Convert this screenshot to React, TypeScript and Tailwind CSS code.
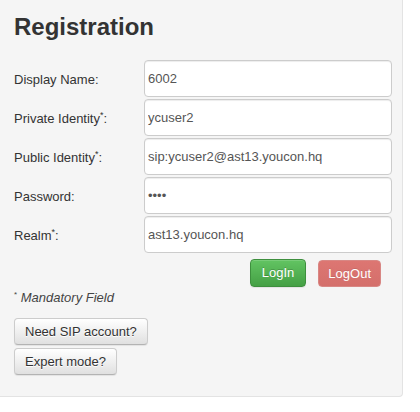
import React from "react";

const font = { fontFamily: '"Liberation Sans", Arial, sans-serif' };

function Row({ label, req, value, type = "text" }: { label: string; req?: boolean; value: string; type?: string }) {
  return (
    <div className="flex items-center h-[37px]">
      <label className="w-[130px] text-[13px] text-[#333] pt-[3px]">
        {label}
        {req && <sup className="text-[9px] -top-[5px]">*</sup>}:
      </label>
      <input
        type={type}
        readOnly
        value={value}
        className="w-[248px] h-[37px] px-[3px] bg-white border border-[#cccccc] rounded-[4px] text-[13px] text-[#555] outline-none shadow-[inset_0_1px_1px_rgba(0,0,0,0.075)]"
        style={font}
      />
    </div>
  );
}

export default function App() {
  return (
    <div className="w-[420px] h-[412px] bg-white" style={font}>
      <div className="w-[403px] h-[397px] bg-[#f5f5f5] border-r border-b border-[#e3e3e3] rounded-br-[4px] pl-[14px] pr-[10px] pt-[15px]">
        <h2 className="text-[24px] leading-[24px] font-bold text-[#333]">Registration</h2>
        <div className="mt-[21px] flex flex-col gap-[2px]">
          <Row label="Display Name" value="6002" />
          <Row label="Private Identity" req value="ycuser2" />
          <Row label="Public Identity" req value="sip:ycuser2@ast13.youcon.hq" />
          <Row label="Password" value="abcd" type="password" />
          <Row label="Realm" req value="ast13.youcon.hq" />
        </div>
        <div className="mt-[6px] flex justify-end gap-[12px] pr-[11px]">
          <button className="h-[28px] px-[11px] rounded-[4px] text-[13px] text-white border border-[#3e8f3e] bg-[linear-gradient(to_bottom,#62c462,#45a045)] [text-shadow:0_-1px_0_rgba(0,0,0,0.2)] shadow-[inset_0_1px_0_rgba(255,255,255,0.15),0_1px_1px_rgba(0,0,0,0.075)]">
            LogIn
          </button>
          <button className="h-[27px] mt-[1px] px-[9px] rounded-[4px] text-[13px] text-white border border-[#d88784] bg-[linear-gradient(to_bottom,#dd7672,#d46f6b)] [text-shadow:0_-1px_0_rgba(0,0,0,0.1)]">
            LogOut
          </button>
        </div>
        <div className="mt-[2px] h-[18px] leading-[18px] text-[13px] text-[#444]">
          <sup className="text-[8px] -top-[5px] not-italic">*</sup> <i>Mandatory Field</i>
        </div>
        <div className="mt-[11px] flex flex-col items-start gap-[3px]">
          <button className="h-[27px] px-[10px] rounded-[4px] text-[13px] text-[#333] border border-[#cccccc] border-b-[#b3b3b3] bg-[linear-gradient(to_bottom,#ffffff,#e0e0e0)] [text-shadow:0_1px_0_#fff] shadow-[inset_0_1px_0_rgba(255,255,255,0.15),0_1px_1px_rgba(0,0,0,0.075)]">
            Need SIP account?
          </button>
          <button className="h-[27px] px-[10px] rounded-[4px] text-[13px] text-[#333] border border-[#cccccc] border-b-[#b3b3b3] bg-[linear-gradient(to_bottom,#ffffff,#e0e0e0)] [text-shadow:0_1px_0_#fff] shadow-[inset_0_1px_0_rgba(255,255,255,0.15),0_1px_1px_rgba(0,0,0,0.075)]">
            Expert mode?
          </button>
        </div>
      </div>
    </div>
  );
}
